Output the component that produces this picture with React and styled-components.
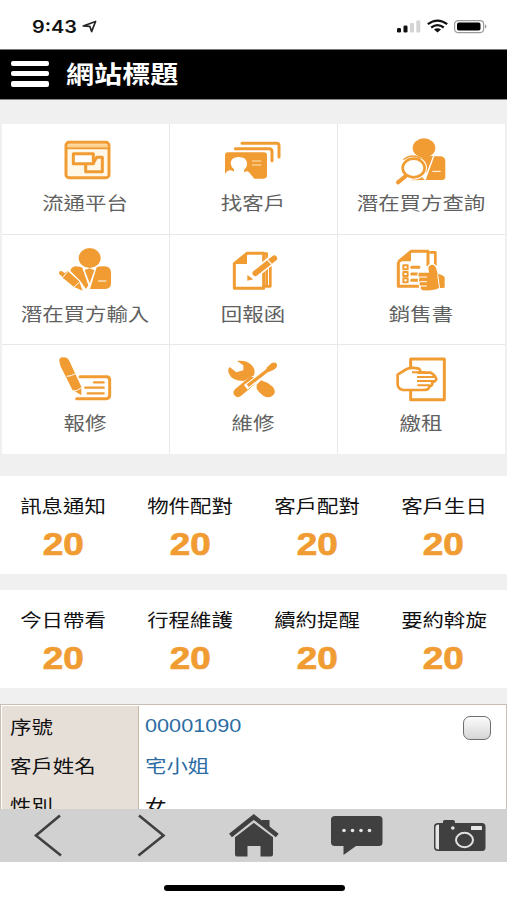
import React from "react";
import styled, { createGlobalStyle } from "styled-components";

const ORANGE = "#f09c33";
const DARK = "#404040";

const GlobalStyle = createGlobalStyle`
  * { box-sizing: border-box; }
  body { margin: 0; background: #fff; }
`;

const Screen = styled.main`
  width: 507px;
  height: 900px;
  overflow: hidden;
  display: flex;
  flex-direction: column;
  background: #fff;
  font-family: "Liberation Sans", "Noto Sans CJK TC", sans-serif;
  color: #111;
`;

const Wide = styled.span`
  display: inline-block;
  white-space: nowrap;
  transform: scaleX(${(p) => p.$by || 1.19});
  transform-origin: ${(p) => p.$from || "center"} center;
`;

const StatusBar = styled.div`
  flex: none;
  height: 50px;
  padding: 4px 19px 0 32px;
  display: flex;
  align-items: center;
  justify-content: space-between;
  border-bottom: 1px solid #777;
`;

const Clock = styled.div`
  display: flex;
  align-items: center;
  font: 600 17px/24px Inter, sans-serif;
  width: 65px;
  justify-content: space-between;
`;

const Header = styled.header`
  flex: none;
  height: 50px;
  padding: 0 11px;
  display: flex;
  align-items: center;
  gap: 17px;
  background: #000;
  border-bottom: 1px solid #888;
`;

const MenuButton = styled.button`
  width: 38px;
  height: 26px;
  padding: 0;
  border: 0;
  background: none;
  display: flex;
  flex-direction: column;
  justify-content: space-between;
  margin-top: -2px;
`;

const MenuBar = styled.span`
  height: 5.6px;
  border-radius: 2px;
  background: #fff;
`;

const Title = styled.h1`
  margin: -3px 0 0;
  font-size: 24px;
  line-height: 30px;
  font-weight: 700;
  color: #fff;
  font-family: "Noto Sans CJK TC", sans-serif;
`;

const Content = styled.section`
  flex: none;
  height: 709px;
  overflow: hidden;
  padding-top: 24px;
  background: #f0f0f0;
`;

const TileGrid = styled.div`
  display: grid;
  grid-template-columns: 167px 167px 167px;
  grid-template-rows: 110px 109px 109px;
  gap: 1px;
  width: 503px;
  margin-left: 2px;
  background: #e8e8e8;
`;

const Tile = styled.div`
  display: flex;
  flex-direction: column;
  align-items: center;
  padding-top: ${(p) => p.$top}px;
  padding-right: 2px;
  background: #fff;

  svg { display: block; flex: none; }
`;

const TileLabel = styled.div`
  margin-top: 4px;
  font-size: 18px;
  line-height: 24px;
  color: #616161;
  font-family: "Noto Sans CJK TC", sans-serif;
`;

const StatRow = styled.div`
  display: grid;
  grid-template-columns: repeat(4, 1fr);
  height: 98px;
  margin-top: ${(p) => p.$gap}px;
  background: #fff;
`;

const Stat = styled.div`
  display: flex;
  flex-direction: column;
  align-items: center;
  padding-top: 17px;
`;

const StatLabel = styled.div`
  font-size: 18px;
  line-height: 24px;
  font-family: "Noto Sans CJK TC", sans-serif;
`;

const StatValue = styled.div`
  margin-top: 10px;
  font: 700 31px/36px "Liberation Sans", sans-serif;
  color: ${ORANGE};
  -webkit-text-stroke: 0.7px ${ORANGE};
`;

const Record = styled.div`
  margin-top: 16px;
  height: 120px;
  border: 1px solid #c9beb4;
  border-top: 1.5px solid #c9beb4;
  display: grid;
  grid-template-columns: 138px 1fr;
  background: #fff;
`;

const FieldNames = styled.div`
  margin: 1px 0 0 1px;
  padding: 0 0 0 8px;
  background: #e6dfd8;
  border-right: 1.5px solid #c9b8a6;
`;

const FieldValues = styled.div`
  padding: 1px 0 0 6px;
`;

const Field = styled.div`
  height: 39.5px;
  display: flex;
  align-items: center;
  justify-content: space-between;
  font-size: 18px;
  line-height: 24px;
  color: ${(p) => (p.$link ? "#2c6ca3" : "#111")};
  font-family: "Noto Sans CJK TC", sans-serif;
`;

const Digits = styled.span`
  font: 19px/24px "Liberation Sans", sans-serif;
`;

const CheckBox = styled.span`
  width: 28px;
  height: 24px;
  margin: 5px 15px 0 0;
  border: 1.5px solid #6e6e6e;
  border-radius: 7px;
  background: linear-gradient(#fbfbfb, #d6d6d6);
`;

const BottomBar = styled.nav`
  flex: none;
  height: 53px;
  background: #d1d1d1;

  svg { display: block; }
`;

const HomeArea = styled.div`
  flex: 1;
  display: flex;
  justify-content: center;
  padding: 23px 0 0 1px;
`;

const HomeIndicator = styled.div`
  width: 181px;
  height: 6px;
  border-radius: 3px;
  background: #000;
`;

function TileIcon({ view, children }) {
  return (
    <svg width="60" height="50" viewBox={view} fill={ORANGE} stroke="none" strokeLinejoin="round">
      {children}
    </svg>
  );
}

const line = (w) => ({ fill: "none", stroke: ORANGE, strokeWidth: w });
const cut = (w) => ({ fill: "none", stroke: "#fff", strokeWidth: w });
const halo = (w) => ({ stroke: "#fff", strokeWidth: w, paintOrder: "stroke" });

const PlatformIcon = () => (
  <TileIcon view="165 48 180 150">
    <rect x="198" y="67" width="129" height="106" rx="9" fill="#fff8e8" stroke={ORANGE} strokeWidth="9" />
    <path d="M204 73H321V81H204Z" fill="#fbd28f" />
    <path {...line(6)} d="M200 85H326" />
    <path {...line(9)} d="M257 134V155H307V112H290L279 131" />
    <path fill="#fff" stroke={ORANGE} strokeWidth="9" d="M220 101H280V131H220Z" />
  </TileIcon>
);

const CardsIcon = () => (
  <TileIcon view="159 48 180 150">
    <path {...line(9)} strokeLinecap="round" d="M216 70H320Q327 70 327 78V111M196 86H298Q306 86 306 95V122" />
    <path d="M174 97H281Q291 97 291 107V166Q291 176 281 176H253L237 157Q232 151 226 155Q222 158 222 152V149Q232 142 231 129Q230 111 206 111Q182 112 182 130Q183 142 192 148V155Q185 149 178 151Q170 154 165 161V107Q165 97 174 97Z" />
    <path {...cut(3)} stroke="#ffe6b8" d="M246 123H274M246 135H274" />
  </TileIcon>
);

const SearchBuyerIcon = () => (
  <TileIcon view="162 48 180 150">
    <ellipse cx="261" cy="84" rx="34" ry="29" />
    <path d="M292 109H311Q325 110 325 125V171Q325 180 315 180H266Z" />
    <path d="M235 118Q264 107 288 108L269 158Z" />
    <path d="M222 181L235 170H255L263 180Z" />
    <path {...cut(3)} d="M286 154H311" />
    <ellipse cx="230" cy="144" rx="40" ry="35" fill="#fff" />
    <ellipse cx="230" cy="144" rx="33" ry="28" fill="#fff" stroke={ORANGE} strokeWidth="8" />
    <path {...line(4)} d="M199 119Q223 99 252 115" />
    <path {...line(12)} strokeLinecap="round" d="M205 169L183 187" />
  </TileIcon>
);

const InputBuyerIcon = () => (
  <TileIcon view="165 36 180 150">
    <ellipse cx="269" cy="69" rx="33" ry="30" />
    <path d="M225 94Q242 94 247 99L265 151L258 162L245 143L211 107Q214 97 225 94Z" />
    <path d="M290 97Q297 93 314 94Q332 95 333 112V148Q332 161 316 162H270Z" />
    <path d="M254 105L269 100L283 106L269 145Z" />
    <path {...cut(3)} d="M294 138H319" />
    <path {...halo(7)} d="M190 117L203 108L237 138L247 165L250 168L222 156L186 127Z" />
    <path {...line(12)} strokeLinecap="round" d="M183 114L193 121" />
    <path {...cut(3)} d="M188 128L203 110M222 156L238 142" />
  </TileIcon>
);

const ReportIcon = () => (
  <TileIcon view="159 36 180 150">
    <path {...line(9)} d="M193 86L231 55H281V160H193Z" />
    <path d="M190 87L231 52V87Z" />
    <path {...line(8)} d="M285 56H290V154M301 82V154H284" />
    <path {...cut(27)} strokeLinecap="round" d="M313 69L256 115" />
    <path {...line(17)} strokeLinecap="round" d="M313 70L256 115" />
    <path {...cut(4)} d="M292 74L305 88" />
    <path d="M232 120L250 133L232 137Z" />
  </TileIcon>
);

const SalesIcon = () => (
  <TileIcon view="162 36 180 150">
    <path {...line(9)} d="M184 81L222 49H273V94M184 81V154H246" />
    <path d="M181 82L222 46V79H190Z" />
    <path {...line(8)} d="M277 52H295V93" />
    <path {...line(6)} d="M199 91H212V103H199ZM199 111H212V123H199ZM199 130H212V142H199Z" />
    <path {...line(9)} strokeLinecap="round" d="M224 97H246M224 117H242M224 136H242" />
    <path {...halo(7)} d="M282 90Q292 87 297 98L302 116Q318 120 323 127V158L304 160Q292 168 257 166Q248 162 252 154Q245 150 249 142Q243 137 248 129Q242 123 246 113H276L274 99Q275 91 282 90Z" />
    <path {...cut(3)} d="M246 126H270M248 140H270M250 153H270M302 118L308 162" />
  </TileIcon>
);

const RepairRequestIcon = () => (
  <TileIcon view="165 33 180 150">
    <path {...line(9)} strokeLinecap="round" d="M240 95H320Q329 95 329 105V151Q329 161 319 161H230" />
    <path {...line(7)} strokeLinecap="round" d="M282 112H311M256 128H311M263 145H311" />
    <path {...halo(7)} d="M178 47Q177 38 189 37Q202 35 208 48L244 125V151L217 134L181 62Z" />
    <path {...cut(3)} d="M200 94Q214 94 226 86M221 138Q233 138 244 128" />
  </TileIcon>
);

const MaintenanceIcon = () => (
  <TileIcon view="669 33 180 150">
    <path d="M711 48Q743 44 759 65Q767 77 762 91L752 96L731 108Q695 108 686 84Q682 73 689 66L709 82L730 76V61Z" />
    <path {...line(27)} strokeLinecap="round" d="M714 143L754 109" />
    <path d="M770 119L783 106Q801 111 818 125Q829 138 821 149Q808 162 792 154Q779 145 770 132Z" />
    <path {...cut(17)} d="M737 127L812 70" />
    <path {...line(10)} d="M743 122L813 68" />
    <path d="M799 69L814 55Q829 49 831 59Q833 67 820 75L806 81Z" />
  </TileIcon>
);

const RentIcon = () => (
  <TileIcon view="411 33 180 150">
    <path {...line(9)} d="M470 72V42H571V164H470V132" />
    <path fill="#fff" stroke={ORANGE} strokeWidth="8" d="M431 89L458 72Q474 66 494 71Q504 77 493 83H530Q546 93 547 103Q545 109 534 113Q538 121 526 124Q527 134 511 135H447Q432 132 431 119Z" />
    <path {...line(6)} d="M474 82H515M489 96H545M489 108H540M490 121H528" />
  </TileIcon>
);

const TILES = [
  ["流通平台", PlatformIcon],
  ["找客戶", CardsIcon],
  ["潛在買方查詢", SearchBuyerIcon],
  ["潛在買方輸入", InputBuyerIcon],
  ["回報函", ReportIcon],
  ["銷售書", SalesIcon],
  ["報修", RepairRequestIcon],
  ["維修", MaintenanceIcon],
  ["繳租", RentIcon],
];

const STATS = [
  ["訊息通知", "物件配對", "客戶配對", "客戶生日"],
  ["今日帶看", "行程維護", "續約提醒", "要約斡旋"],
];

const LocationIcon = () => (
  <svg width="15" height="14" viewBox="0 0 15 14" fill="none" stroke="#222" strokeWidth="1.6" strokeLinejoin="round">
    <path d="M1.2 6L13.6 1.4L9.6 11.6L7.9 6.4Z" />
  </svg>
);

const SignalIcons = () => (
  <svg width="92" height="16" viewBox="0 0 92 16">
    <rect x="1" y="9" width="4" height="4.5" rx="1.3" fill="#111" />
    <rect x="7.5" y="6.5" width="4" height="7" rx="1.3" fill="#111" />
    <rect x="14" y="4" width="4" height="9.5" rx="1" fill="#d4d4d4" />
    <rect x="20.3" y="1.5" width="4" height="12" rx="1" fill="#d4d4d4" />
    <g fill="none" stroke="#111" strokeWidth="2.2">
      <path d="M31.8 5.2Q41.5 -2 51.2 5.2" />
      <path d="M35.2 8.5Q41.5 3.8 47.8 8.5" />
    </g>
    <path d="M38 10.6Q41.5 8 45 10.6L41.5 13.5Z" fill="#111" />
    <rect x="58.6" y="1.6" width="29" height="12" rx="3.5" fill="#fff" stroke="#9b9b9b" strokeWidth="1.2" />
    <rect x="61" y="3.6" width="23.5" height="8" rx="1.8" fill="#000" />
    <path d="M89 5.3Q92 7.5 89 9.8Z" fill="#999" />
  </svg>
);

const NavIcons = () => (
  <svg width="507" height="53" viewBox="0 0 507 53">
    <g fill="none" stroke={DARK} strokeWidth="2.6">
      <path d="M60 6.5L36 26.5L61 46.5" />
      <path d="M139 6.5L163.5 26.5L138.5 46.5" />
    </g>
    <g fill={DARK}>
      <path d="M253.800 12.500L273 27.500V45.500Q273 47.500 271 47.500H260.500V37H247.500V47.500H237Q235 47.500 235 45.500V27.500Z" />
      <path d="M262 11H269.500V20L262 14Z" />
      <path d="M230.500 26.500L253.800 8L277.300 26.500" fill="none" stroke={DARK} strokeWidth="4.600" />
      <path d="M335 7H379Q382.500 7 382.500 10.500V33.500Q382.500 37 379 37H356L343.500 46V37H335Q331 37 331 33.500V10.500Q331 7 335 7Z" />
      <path d="M441 14H443V12.500Q443 11 444.500 11H453Q455 11 455 13V14H482Q485.500 14 485.500 17.500V38.500Q485.500 42 482 42H438Q434 42 434 38V17.500Q434 14 438 14Z" />
    </g>
    <path d="M235 27.500L253.800 13L273 27.500" fill="none" stroke="#d1d1d1" strokeWidth="1.400" />
    <g fill="#e5e5e5">
      <circle cx="344" cy="21.500" r="1.800" />
      <circle cx="352.500" cy="21.500" r="1.800" />
      <circle cx="361" cy="21.500" r="1.800" />
      <circle cx="369.500" cy="21.500" r="1.800" />
      <path d="M439 15.500V40.500Q435.500 40.500 435.500 38V18Q435.500 15.500 439 15.500Z" />
      <circle cx="452.800" cy="19" r="1.800" />
      <rect x="471" y="17" width="11" height="4" rx="0.600" />
    </g>
    <ellipse cx="464.500" cy="31" rx="8.500" ry="7.200" fill="none" stroke="#e0e0e0" strokeWidth="2" />
  </svg>
);

export default function App() {
  return (
    <>
      <GlobalStyle />
      <Screen>
        <StatusBar>
          <Clock>
            <Wide $by={1.17} $from="left">9:43</Wide>
            <LocationIcon />
          </Clock>
          <SignalIcons />
        </StatusBar>
        <Header>
          <MenuButton aria-label="Menu">
            <MenuBar />
            <MenuBar />
            <MenuBar />
          </MenuButton>
          <Title>
            <Wide $by={1.17} $from="left">網站標題</Wide>
          </Title>
        </Header>
        <Content>
          <TileGrid>
            {TILES.map(([label, Icon], i) => (
              <Tile key={label} $top={i < 6 ? 12 : 11}>
                <Icon />
                <TileLabel>
                  <Wide>{label}</Wide>
                </TileLabel>
              </Tile>
            ))}
          </TileGrid>
          {STATS.map((row, i) => (
            <StatRow key={i} $gap={i === 0 ? 22 : 16}>
              {row.map((label) => (
                <Stat key={label}>
                  <StatLabel>
                    <Wide>{label}</Wide>
                  </StatLabel>
                  <StatValue>
                    <Wide>20</Wide>
                  </StatValue>
                </Stat>
              ))}
            </StatRow>
          ))}
          <Record>
            <FieldNames>
              <Field><Wide $from="left">序號</Wide></Field>
              <Field><Wide $from="left">客戶姓名</Wide></Field>
              <Field><Wide $from="left">性別</Wide></Field>
            </FieldNames>
            <FieldValues>
              <Field $link>
                <Digits><Wide $by={1.14} $from="left">00001090</Wide></Digits>
                <CheckBox role="checkbox" aria-checked="false" />
              </Field>
              <Field $link><Wide $from="left">宅小姐</Wide></Field>
              <Field><Wide $from="left">女</Wide></Field>
            </FieldValues>
          </Record>
        </Content>
        <BottomBar>
          <NavIcons />
        </BottomBar>
        <HomeArea>
          <HomeIndicator />
        </HomeArea>
      </Screen>
    </>
  );
}
